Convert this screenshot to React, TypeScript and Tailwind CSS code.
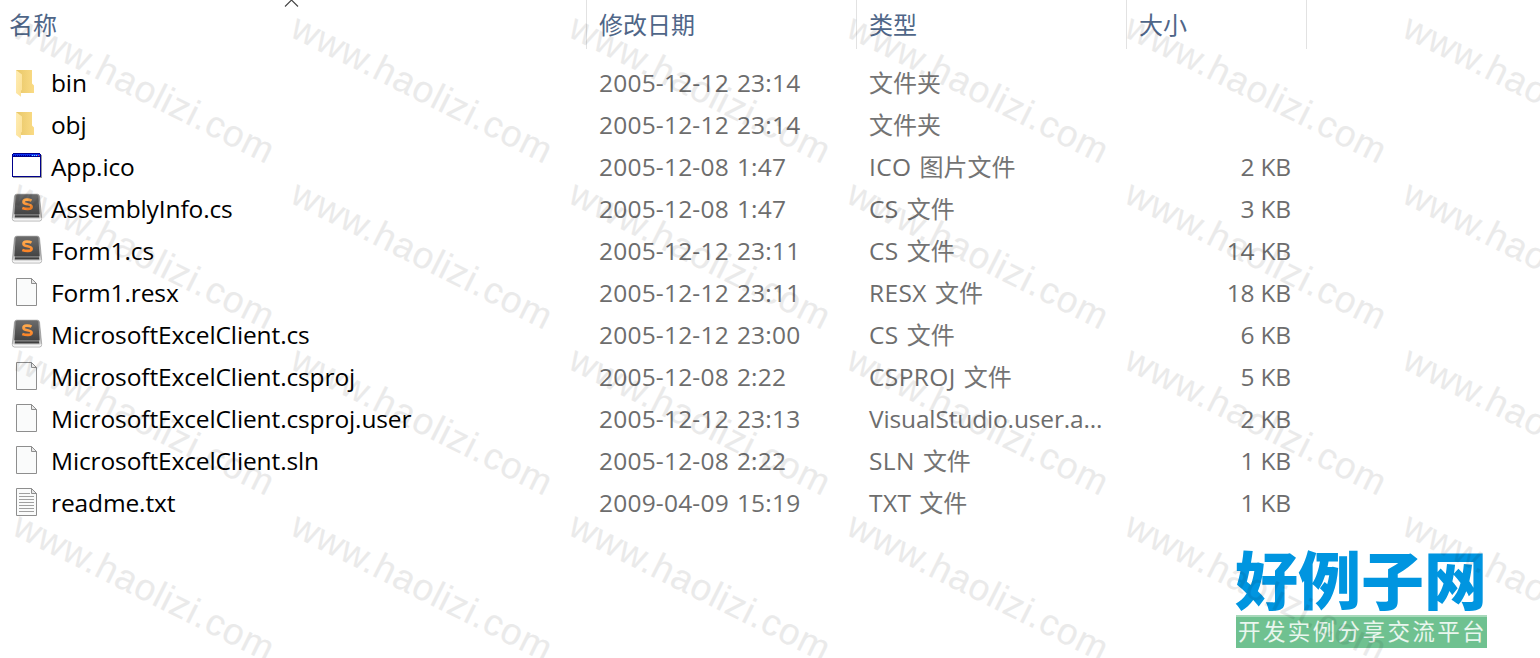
import React from "react";

type IconKind = "folder" | "window" | "sublime" | "file" | "text";

type FileRow = {
  name: string;
  date: string;
  ext?: string;
  type?: string;
  size?: string;
  icon: IconKind;
};

const files: FileRow[] = [
  { name: "bin", date: "2005-12-12 23:14", type: "文件夹", icon: "folder" },
  { name: "obj", date: "2005-12-12 23:14", type: "文件夹", icon: "folder" },
  { name: "App.ico", date: "2005-12-08 1:47", ext: "ICO", type: "图片文件", size: "2 KB", icon: "window" },
  { name: "AssemblyInfo.cs", date: "2005-12-08 1:47", ext: "CS", type: "文件", size: "3 KB", icon: "sublime" },
  { name: "Form1.cs", date: "2005-12-12 23:11", ext: "CS", type: "文件", size: "14 KB", icon: "sublime" },
  { name: "Form1.resx", date: "2005-12-12 23:11", ext: "RESX", type: "文件", size: "18 KB", icon: "file" },
  { name: "MicrosoftExcelClient.cs", date: "2005-12-12 23:00", ext: "CS", type: "文件", size: "6 KB", icon: "sublime" },
  { name: "MicrosoftExcelClient.csproj", date: "2005-12-08 2:22", ext: "CSPROJ", type: "文件", size: "5 KB", icon: "file" },
  { name: "MicrosoftExcelClient.csproj.user", date: "2005-12-12 23:13", ext: "VisualStudio.user.a...", size: "2 KB", icon: "file" },
  { name: "MicrosoftExcelClient.sln", date: "2005-12-08 2:22", ext: "SLN", type: "文件", size: "1 KB", icon: "file" },
  { name: "readme.txt", date: "2009-04-09 15:19", ext: "TXT", type: "文件", size: "1 KB", icon: "text" },
];

const FolderIcon = () => (
  <svg width="32" height="32" viewBox="0 0 32 32">
    <defs>
      <linearGradient id="folderBack" x1="0" y1="0" x2="1" y2="0">
        <stop offset="0" stopColor="#e8c768" />
        <stop offset="1" stopColor="#fadb85" />
      </linearGradient>
      <linearGradient id="folderFront" x1="0" y1="0" x2="1" y2="1">
        <stop offset="0" stopColor="#ffedb4" />
        <stop offset="1" stopColor="#fbdf94" />
      </linearGradient>
    </defs>
    <path d="M5 4h16v13.5l2 2v7.500H10L5 25z" fill="url(#folderBack)" />
    <path d="M5 4l6 4.500v15.500l-1 .5v6.300L5 27z" fill="url(#folderFront)" />
  </svg>
);

const WindowIcon = () => (
  <svg width="32" height="32" viewBox="0 0 32 32" shapeRendering="crispEdges">
    <path d="M2 5h29v23H2z" fill="#9a9a9a" />
    <path d="M1 4h29v23H1zM2 3h27v1H2z" fill="#00008b" />
    <path d="M2 7h27v19H2z" fill="#fff" />
    <path d="M2 4h27v2H2z" fill="#0b2ff0" />
    <path d="M3 5.500h17" stroke="#00008b" strokeDasharray="1 1" />
    <path d="M21 5.500h1m1 0h1m1 0h1" stroke="#7ce6ff" />
    <path d="M27 5.500h1" stroke="#ff3b3b" />
  </svg>
);

const SublimeIcon = () => (
  <svg width="32" height="32" viewBox="0 0 32 32">
    <defs>
      <linearGradient id="keyBase" x1="0" y1="0" x2="0" y2="1">
        <stop offset="0" stopColor="#8d8d8d" />
        <stop offset="0.7" stopColor="#b8b8b8" />
        <stop offset="1" stopColor="#e8e8e8" />
      </linearGradient>
      <linearGradient id="keyTop" x1="0" y1="0" x2="0" y2="1">
        <stop offset="0" stopColor="#6b6b6b" />
        <stop offset="1" stopColor="#434343" />
      </linearGradient>
      <linearGradient id="keyGlyph" x1="0" y1="0" x2="0" y2="1">
        <stop offset="0" stopColor="#ffa94c" />
        <stop offset="1" stopColor="#fb8427" />
      </linearGradient>
    </defs>
    <path d="M5.500 2.200h21q1.600 0 2 2l2.200 22q0 2.800-2 2.800H3.300q-2 0-2-2.800l2.200-22q.4-2 2-2z" fill="url(#keyBase)" stroke="#858585" strokeWidth="0.6" />
    <path d="M2.200 26.200q0 1.500 1.500 1.500h24.600q1.500 0 1.500-1.500" fill="none" stroke="#f4f4f4" strokeWidth="1.600" />
    <path d="M4 23.200h24l.3 2.200H3.700z" fill="#3f3f3f" />
    <path d="M6.500 2.500h19q1.600 0 1.800 1.600l1.300 17.100q0 1.500-1.500 1.500H4.900q-1.500 0-1.500-1.500L4.700 4.100Q4.900 2.500 6.500 2.500z" fill="url(#keyTop)" />
    <path d="M4.500 22.600h23" stroke="#8a8a8a" strokeWidth="0.6" />
    <path d="M20.500 8.600C18.200 7.400 12.500 6.900 12.500 9.900c0 3 8.100 1.700 8.100 4.800 0 3.100-6.100 2.500-9.300 1.200" fill="none" stroke="url(#keyGlyph)" strokeWidth="2.700" />
  </svg>
);

const DocIcon = ({ lined }: { lined?: boolean }) => (
  <svg width="32" height="32" viewBox="0 0 32 32">
    <path d="M5.500 2.500h15l5 5v22h-20z" fill="#fafbfb" stroke="#8e8e8e" />
    <path d="M20.500 2.500v5h5z" fill="#e8e8e8" stroke="#8e8e8e" />
    {lined && <path d="M8 7.500h11M8 10.500h15M8 13.500h15M8 16.500h15M8 19.500h15M8 22.500h15M8 25.500h15" stroke="#a0a0a0" />}
  </svg>
);

const FileIcon = ({ kind }: { kind: IconKind }) => {
  if (kind === "folder") return <FolderIcon />;
  if (kind === "window") return <WindowIcon />;
  if (kind === "sublime") return <SublimeIcon />;
  return <DocIcon lined={kind === "text"} />;
};

const HeaderRow = () => (
  <div className="flex h-[49px] text-[24px] leading-[49px] text-[#4f6688]">
    <div className="w-[587px] border-r border-[#e2e2e2] pl-[9px]">名称</div>
    <div className="w-[270px] border-r border-[#e2e2e2] pl-3">修改日期</div>
    <div className="w-[270px] border-r border-[#e2e2e2] pl-3">类型</div>
    <div className="w-[180px] border-r border-[#e2e2e2] pl-3">大小</div>
  </div>
);

const Row = ({ file }: { file: FileRow }) => (
  <div className="flex h-[42px] items-center whitespace-pre text-[24.5px] leading-[42px] text-[#6d6d6d]">
    <div className="flex w-[599px] items-center pl-[11px]">
      <span className="mr-2 pb-0.5"><FileIcon kind={file.icon} /></span>
      <span className="tracking-[-0.12px] text-black">{file.name}</span>
    </div>
    <div className="w-[270px] tracking-[0.2px] [word-spacing:1.5px]">{file.date}</div>
    <div className="flex w-[258px] gap-2">
      {file.ext && (
        <span className={file.type ? "tracking-[0.4px]" : "tracking-[-0.15px]"}>{file.ext}</span>
      )}
      {file.type && <span className="text-[24px] text-[#747474]">{file.type}</span>}
    </div>
    <div className="w-[164px] text-right tracking-[-0.2px]">{file.size}</div>
  </div>
);

const Watermark = () => (
  <div className="pointer-events-none absolute inset-0 overflow-hidden">
    <div className="ml-[7px] grid w-[1668px] grid-cols-6 pt-[3px]">
      {Array.from({ length: 24 }, (_, i) => (
        <div key={i} className="h-[166px] w-[278px]">
          <span className="block origin-bottom-left rotate-[26.6deg] font-['Liberation_Sans',sans-serif] text-[37px] leading-[40px] tracking-[0.9px] text-black opacity-8 [-webkit-text-stroke:0.2px_#000]">
            www.haolizi.com
          </span>
        </div>
      ))}
    </div>
  </div>
);

const SiteLogo = () => (
  <div className="absolute left-[1235px] top-[544px] w-[252px] whitespace-nowrap font-['Noto_Sans_CJK_SC',sans-serif]">
    <div className="h-[71px] text-[63px] font-black leading-[65px] text-[#0095e0]">好例子网</div>
    <div className="ml-px h-[33px] border-t-2 border-[#a8d9bb] bg-[#6fc190] pl-0.5 text-[22.5px] leading-[27px] tracking-[2.4px] text-white/85">
      开发实例分享交流平台
    </div>
  </div>
);

const App: React.FC = () => {
  return (
    <div className="relative h-[658px] w-[1540px] overflow-hidden bg-white font-['Open_Sans','Noto_Sans_CJK_SC',sans-serif]">
      <HeaderRow />
      <div className="pt-[13px]">
        {files.map((file) => (
          <Row key={file.name} file={file} />
        ))}
      </div>
      <svg className="absolute left-[284px] top-0" width="15" height="7" viewBox="0 0 15 7">
        <path d="M1 6.500L7.500 0L14 6.500" fill="none" stroke="#444" strokeWidth="1.100" />
      </svg>
      <SiteLogo />
      <Watermark />
    </div>
  );
};

export default App;
